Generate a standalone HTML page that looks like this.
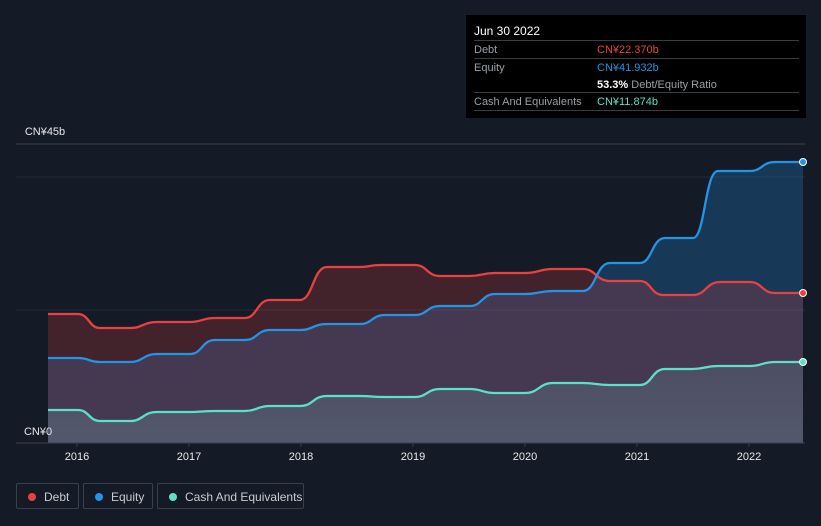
<!DOCTYPE html>
<html><head><meta charset="utf-8"><style>
body{margin:0;width:821px;height:526px;background:#151b26;font-family:"Liberation Sans",sans-serif;overflow:hidden;position:relative}
.tt{position:absolute;left:466px;top:15px;width:340px;height:103px;background:#000;}
.tt .h{position:absolute;left:8px;top:9px;color:#fff;font-size:12px}
.row{position:absolute;left:8px;width:325px;border-top:1px solid #3a3d42;height:18px;font-size:11px;color:#9aa0a6;line-height:18px}
.row span{position:absolute;left:123px}
.leg{position:absolute;top:483px;height:26px;border:1px solid #3a404a;border-radius:2px;color:#c8ccd0;font-size:12px;line-height:26px;box-sizing:border-box}
.leg i{position:absolute;left:11px;top:9px;width:8px;height:8px;border-radius:50%}
.leg b{font-weight:normal;position:absolute;left:27px;top:0}
</style></head><body>
<svg width="821" height="526" style="position:absolute;left:0;top:0">
<defs><linearGradient id="cg" x1="0" y1="0" x2="0" y2="1"><stop offset="0" stop-color="rgba(120,170,180,0.18)"/><stop offset="1" stop-color="rgba(120,170,180,0.28)"/></linearGradient></defs>
<line x1="16" y1="144" x2="805" y2="144" stroke="#3a404a"/>
<line x1="16" y1="177" x2="805" y2="177" stroke="#252b35"/>
<line x1="16" y1="310" x2="805" y2="310" stroke="#252b35"/>
<path fill="rgba(33,150,243,0.24)" d="M48,358 L78,358 C89,358 89,362 100,362 L130,362 C143,362 143,354 157,354 L190,354 C202,354 202,340 215,340 L245,340 C257,340 257,330 270,330 L300,330 C313,330 313,324 327,324 L360,324 C372,324 372,315 385,315 L415,315 C427,315 427,306 440,306 L470,306 C482,306 482,294 495,294 L525,294 C539,294 539,291 553,291 L583,291 C596,291 596,263 610,263 L640,263 C652,263 652,238 665,238 L693,238 C705,238 705,171 718,171 L750,171 C762,171 762,162 775,162 L803,162 L803,443 L48,443Z"/>
<path fill="rgba(232,65,66,0.22)" d="M48,314 L78,314 C89,314 89,328 100,328 L130,328 C143,328 143,322 157,322 L190,322 C202,322 202,318 215,318 L245,318 C257,318 257,300 270,300 L300,300 C313,300 313,267 327,267 L360,267 C370,267 370,265 380,265 L415,265 C427,265 427,276 440,276 L470,276 C482,276 482,273 495,273 L525,273 C539,273 539,269 553,269 L583,269 C596,269 596,281 610,281 L640,281 C651,281 651,295 663,295 L693,295 C706,295 706,282 720,282 L750,282 C762,282 762,293 775,293 L803,293 L803,443 L48,443Z"/>
<path fill="url(#cg)" d="M48,410 L78,410 C89,410 89,421 100,421 L130,421 C143,421 143,412 157,412 L190,412 C202,412 202,411 215,411 L245,411 C257,411 257,406 270,406 L300,406 C313,406 313,396 327,396 L360,396 C372,396 372,397 385,397 L415,397 C427,397 427,389 440,389 L470,389 C482,389 482,393 495,393 L525,393 C539,393 539,383 553,383 L583,383 C596,383 596,385 610,385 L640,385 C652,385 652,369 665,369 L693,369 C705,369 705,366 718,366 L750,366 C762,366 762,362 775,362 L803,362 L803,443 L48,443Z"/>
<g fill="none" stroke-width="2.3">
<path stroke="#e84142" d="M48,314 L78,314 C89,314 89,328 100,328 L130,328 C143,328 143,322 157,322 L190,322 C202,322 202,318 215,318 L245,318 C257,318 257,300 270,300 L300,300 C313,300 313,267 327,267 L360,267 C370,267 370,265 380,265 L415,265 C427,265 427,276 440,276 L470,276 C482,276 482,273 495,273 L525,273 C539,273 539,269 553,269 L583,269 C596,269 596,281 610,281 L640,281 C651,281 651,295 663,295 L693,295 C706,295 706,282 720,282 L750,282 C762,282 762,293 775,293 L803,293"/>
<path stroke="#2394e6" d="M48,358 L78,358 C89,358 89,362 100,362 L130,362 C143,362 143,354 157,354 L190,354 C202,354 202,340 215,340 L245,340 C257,340 257,330 270,330 L300,330 C313,330 313,324 327,324 L360,324 C372,324 372,315 385,315 L415,315 C427,315 427,306 440,306 L470,306 C482,306 482,294 495,294 L525,294 C539,294 539,291 553,291 L583,291 C596,291 596,263 610,263 L640,263 C652,263 652,238 665,238 L693,238 C705,238 705,171 718,171 L750,171 C762,171 762,162 775,162 L803,162"/>
<path stroke="#5ee0c8" d="M48,410 L78,410 C89,410 89,421 100,421 L130,421 C143,421 143,412 157,412 L190,412 C202,412 202,411 215,411 L245,411 C257,411 257,406 270,406 L300,406 C313,406 313,396 327,396 L360,396 C372,396 372,397 385,397 L415,397 C427,397 427,389 440,389 L470,389 C482,389 482,393 495,393 L525,393 C539,393 539,383 553,383 L583,383 C596,383 596,385 610,385 L640,385 C652,385 652,369 665,369 L693,369 C705,369 705,366 718,366 L750,366 C762,366 762,362 775,362 L803,362"/>
</g>
<circle cx="803" cy="162" r="3.5" fill="#2394e6" stroke="#fff" stroke-width="1"/>
<circle cx="803" cy="293" r="3.5" fill="#e84142" stroke="#fff" stroke-width="1"/>
<circle cx="803" cy="362" r="3.5" fill="#5ee0c8" stroke="#fff" stroke-width="1"/>
<rect x="16" y="422" width="31" height="20" fill="#151b26"/>
<line x1="16" y1="443" x2="805" y2="443" stroke="#3a404a"/>
<g stroke="#3a404a"><line x1="77" y1="443" x2="77" y2="447"/><line x1="189" y1="443" x2="189" y2="447"/><line x1="301" y1="443" x2="301" y2="447"/><line x1="413" y1="443" x2="413" y2="447"/><line x1="525" y1="443" x2="525" y2="447"/><line x1="637" y1="443" x2="637" y2="447"/><line x1="749" y1="443" x2="749" y2="447"/></g>
<g fill="#e6e8ea" font-size="11" text-anchor="middle" font-family="Liberation Sans">
<text x="77" y="460">2016</text><text x="189" y="460">2017</text><text x="301" y="460">2018</text><text x="413" y="460">2019</text><text x="525" y="460">2020</text><text x="637" y="460">2021</text><text x="749" y="460">2022</text>
<text x="45" y="135">CN¥45b</text><text x="38" y="435">CN¥0</text>
</g>
</svg>
<div class="tt">
<div class="h">Jun 30 2022</div>
<div class="row" style="top:25px">Debt<span style="color:#e84142">CN¥22.370b</span></div>
<div class="row" style="top:43px">Equity<span style="color:#2394e6">CN¥41.932b</span></div>
<div class="row" style="top:61px;border-top:none"><span><b style="color:#fff">53.3%</b> Debt/Equity Ratio</span></div>
<div class="row" style="top:77px">Cash And Equivalents<span style="color:#5ee0c8">CN¥11.874b</span></div>
<div class="row" style="top:95px;height:0"></div>
</div>
<div class="leg" style="left:16px;width:63px"><i style="background:#e84142"></i><b>Debt</b></div>
<div class="leg" style="left:83px;width:70px"><i style="background:#2394e6"></i><b>Equity</b></div>
<div class="leg" style="left:157px;width:147px"><i style="background:#5ee0c8"></i><b>Cash And Equivalents</b></div>
</body></html>
